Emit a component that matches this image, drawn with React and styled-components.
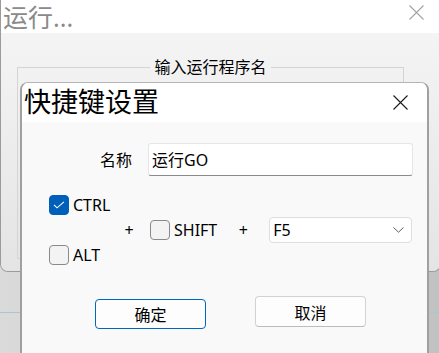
import styled, { createGlobalStyle } from 'styled-components';

const GlobalStyle = createGlobalStyle`
  html, body {
    margin: 0;
    padding: 0;
  }
  body {
    font-family: "Noto Sans", "Noto Sans CJK SC", sans-serif;
    color: #000;
  }
`;

function CloseIcon({ color, size = 15 }) {
    return (
        <svg width={size} height={size} viewBox="0 0 15 15">
            <path d="M0.5 0.5L14.5 14.5M14.5 0.5L0.5 14.5" stroke={color} strokeWidth="1.1" fill="none" />
        </svg>
    );
}

function CheckBox({ checked, label }) {
    return (
        <CheckItem>
            <Box $checked={checked}>
                {checked && (
                    <svg width="12" height="8" viewBox="0 0 12 8">
                        <path d="M1 3.8L4 6.8L11 0.8" stroke="#fff" strokeWidth="1.1" fill="none" />
                    </svg>
                )}
            </Box>
            <span>{label}</span>
        </CheckItem>
    );
}

export default function App() {
    return (
        <>
            <GlobalStyle />
            <Desktop>
                <BackWindow>
                    <BackTitleBar>
                        <BackTitle>运行...</BackTitle>
                        <BackClose><CloseIcon color="#a3a3a3" size={15} /></BackClose>
                    </BackTitleBar>
                    <BackBody>
                        <GroupBox>
                            <legend>输入运行程序名</legend>
                        </GroupBox>
                    </BackBody>
                </BackWindow>

                <Dialog>
                    <TitleBar>
                        <Title>快捷键设置</Title>
                        <CloseIcon color="#1a1a1a" size={15} />
                    </TitleBar>
                    <Body>
                        <NameRow>
                            <Label>名称</Label>
                            <TextInput defaultValue="运行GO" />
                        </NameRow>

                        <ModRow>
                            <ModColumn>
                                <CheckBox checked label="CTRL" />
                                <CheckBox label="ALT" />
                            </ModColumn>
                            <Plus>+</Plus>
                            <ShiftSlot>
                                <CheckBox label="SHIFT" />
                            </ShiftSlot>
                            <Plus $gap={21}>+</Plus>
                            <Combo>
                                <span>F5</span>
                                <svg width="11" height="6" viewBox="0 0 11 6">
                                    <path d="M0.5 0.5L5.5 5.2L10.5 0.5" stroke="#5c5c5c" strokeWidth="1" fill="none" />
                                </svg>
                            </Combo>
                        </ModRow>

                        <ButtonRow>
                            <Button $primary>确定</Button>
                            <Button>取消</Button>
                        </ButtonRow>
                    </Body>
                </Dialog>
            </Desktop>
        </>
    );
}

const Desktop = styled.div`
    position: relative;
    width: 439px;
    height: 353px;
    overflow: hidden;
    background:
        linear-gradient(to bottom, transparent 312px, #a8c6d7 312px, #a8c6d7 313px, transparent 313px),
        linear-gradient(90deg, #dadada, #c2c2c2);
`;

/* windows on the desktop */
const BackWindow = styled.div`
    position: absolute;
    left: 0;
    top: 0;
    width: 441px;
    height: 272px;
    box-sizing: border-box;
    display: flex;
    flex-direction: column;
    border: 1px solid #9b9b9b;
    border-top: none;
    border-radius: 0 0 8px 8px;
    overflow: hidden;
`;

const BackTitleBar = styled.div`
    height: 33px;
    flex-shrink: 0;
    display: flex;
    align-items: center;
    justify-content: space-between;
    padding: 0 16px 0 2px;
    background: #fff;
`;

const BackTitle = styled.div`
    font-size: 25px;
    line-height: 31px;
    margin-top: 2px;
    color: #8a8a8a;
`;

const BackClose = styled.div`
    display: flex;
    margin-bottom: 8px;
`;

const BackBody = styled.div`
    flex: 1;
    padding: 24px 36px 0 16px;
    background: linear-gradient(#f4f4f4, #e4e4e4);
`;

const GroupBox = styled.fieldset`
    margin: 0;
    padding: 0;
    height: 200px;
    border: 1px solid #d4d4d4;
    border-radius: 0;

    legend {
        margin: 0 auto;
        padding: 0 4px;
        font-size: 16px;
        line-height: 20px;
        color: #000;
    }
`;

const Dialog = styled.div`
    position: absolute;
    left: 20px;
    top: 82px;
    width: 409px;
    height: 290px;
    box-sizing: border-box;
    display: flex;
    flex-direction: column;
    background: #f9f9f9;
    border: 2px solid #a0a0a0;
    border-top: 1px solid #b4b4b4;
    border-radius: 8px;
    overflow: hidden;
`;

const TitleBar = styled.div`
    height: 39px;
    flex-shrink: 0;
    display: flex;
    align-items: center;
    justify-content: space-between;
    padding: 0 19px 0 2px;
    background: #fff;
`;

const Title = styled.div`
    font-size: 27px;
    line-height: 1.2;
`;

const Body = styled.div`
    display: flex;
    flex-direction: column;
    padding: 21px 0 0 27px;
    font-size: 16px;
`;

const NameRow = styled.div`
    display: flex;
    align-items: center;
`;

const Label = styled.div`
    width: 83px;
    margin-right: 16px;
    text-align: right;
    line-height: 20px;
`;

const TextInput = styled.input`
    width: 265px;
    height: 33px;
    box-sizing: border-box;
    padding: 0 0 2px 3px;
    font-family: inherit;
    font-size: 16px;
    color: #000;
    background: #fff;
    border: 1px solid #e6e6e6;
    border-bottom-color: #8a8a8a;
    border-radius: 3px;
    outline: none;
`;

const ModRow = styled.div`
    display: flex;
    align-items: center;
    margin-top: 19px;
`;

const ModColumn = styled.div`
    width: 75px;
    display: flex;
    flex-direction: column;
    gap: 30px;
`;

const CheckItem = styled.label`
    display: flex;
    align-items: center;
    gap: 4px;
    height: 20px;
    line-height: 20px;
`;

const Box = styled.span`
    width: 20px;
    height: 20px;
    box-sizing: border-box;
    display: flex;
    align-items: center;
    justify-content: center;
    border-radius: 4px;
    background: ${(p) => (p.$checked ? '#005fb8' : '#f3f3f3')};
    border: 1px solid ${(p) => (p.$checked ? '#005fb8' : '#8a8a8a')};
`;

const Plus = styled.span`
    width: 10px;
    text-align: center;
    line-height: 20px;
    margin-left: ${(p) => p.$gap || 0}px;
`;

const ShiftSlot = styled.div`
    margin-left: 16px;
`;

const Combo = styled.div`
    width: 143px;
    height: 26px;
    margin-left: 21px;
    box-sizing: border-box;
    display: flex;
    align-items: center;
    justify-content: space-between;
    padding: 0 7px 0 3px;
    background: #fff;
    border: 1px solid #dedede;
    border-radius: 4px;
`;

const ButtonRow = styled.div`
    display: flex;
    align-items: flex-start;
    gap: 49px;
    margin-top: 31px;
    padding-left: 46px;
`;

const Button = styled.button`
    width: 111px;
    height: ${(p) => (p.$primary ? 30 : 31)}px;
    margin-top: ${(p) => (p.$primary ? 3 : 0)}px;
    box-sizing: border-box;
    font-family: inherit;
    font-size: 16px;
    color: #000;
    background: #fdfdfd;
    border: 1px solid ${(p) => (p.$primary ? '#0067c0' : '#d2d2d2')};
    border-bottom-color: ${(p) => (p.$primary ? '#0067c0' : '#bcbcbc')};
    border-radius: 4px;
    padding: 0;
`;
